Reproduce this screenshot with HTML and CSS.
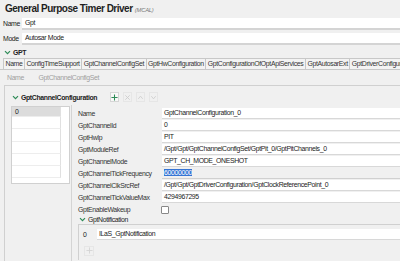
FILE: index.html
```html
<!DOCTYPE html>
<html lang="en">
<head>
    <meta charset="UTF-8">
    <title>General Purpose Timer Driver</title>
    <link rel="stylesheet" href="styles.css">
</head>
<body>
    <div class="title">General Purpose Timer Driver <span class="mcal">(MCAL)</span></div>

    <div class="field-row">
        <label>Name</label>
        <div class="field">Gpt</div>
    </div>
    <div class="field-row">
        <label>Mode</label>
        <div class="field">Autosar Mode</div>
    </div>

    <div class="section-head">
        <svg class="chev" width="7" height="5" viewBox="0 0 7 5"><path d="M1 1.2l2.5 2.5 2.5-2.5" stroke="#2e8b57" stroke-width="1.2" fill="none"/></svg>
        GPT
    </div>

    <div class="tabs">
        <div class="tab">Name</div>
        <div class="tab">ConfigTimeSupport</div>
        <div class="tab">GptChannelConfigSet</div>
        <div class="tab">GptHwConfiguration</div>
        <div class="tab">GptConfigurationOfOptApiServices</div>
        <div class="tab">GptAutosarExt</div>
        <div class="tab">GptDriverConfiguration</div>
    </div>

    <div class="set-name">
        <span class="set-label">Name</span>
        <span>GptChannelConfigSet</span>
    </div>

    <div class="panel">
        <div class="panel-head">
            <svg class="chev" width="7" height="5" viewBox="0 0 7 5"><path d="M1 1.2l2.5 2.5 2.5-2.5" stroke="#2e8b57" stroke-width="1.2" fill="none"/></svg>
            <span class="panel-title">GptChannelConfiguration</span>
            <div class="tools">
                <span class="tool add">
                    <svg width="7" height="7" viewBox="0 0 8 8"><path d="M4 0.5v7M0.5 4h7" stroke="#2e8b57" stroke-width="1.2"/></svg>
                </span>
                <span class="tool">
                    <svg width="7" height="7" viewBox="0 0 8 8"><path d="M1.5 1.5l5 5M6.5 1.5l-5 5" stroke="#cdcdcd" stroke-width="1"/></svg>
                </span>
                <span class="tool">
                    <svg width="7" height="7" viewBox="0 0 8 8"><path d="M1.5 5.5l2.5-3 2.5 3" stroke="#cdcdcd" stroke-width="1" fill="none"/></svg>
                </span>
                <span class="tool">
                    <svg width="7" height="7" viewBox="0 0 8 8"><path d="M1.5 2.5l2.5 3 2.5-3" stroke="#cdcdcd" stroke-width="1" fill="none"/></svg>
                </span>
            </div>
        </div>

        <div class="panel-body">
            <div class="left">
                <div class="list">
                    <div class="list-row selected">0</div>
                    <div class="list-row"></div>
                    <div class="list-row"></div>
                    <div class="list-row"></div>
                    <div class="list-row"></div>
                    <div class="list-row"></div>
                </div>
            </div>

            <div class="props">
                <div class="prop"><span class="prop-label">Name</span><div class="value">GptChannelConfiguration_0</div></div>
                <div class="prop"><span class="prop-label">GptChannelId</span><div class="value">0</div></div>
                <div class="prop"><span class="prop-label">GptHwIp</span><div class="value">PIT</div></div>
                <div class="prop"><span class="prop-label">GptModuleRef</span><div class="value">/Gpt/Gpt/GptChannelConfigSet/GptPit_0/GptPitChannels_0</div></div>
                <div class="prop"><span class="prop-label">GptChannelMode</span><div class="value">GPT_CH_MODE_ONESHOT</div></div>
                <div class="prop"><span class="prop-label">GptChannelTickFrequency</span><div class="value editing"><span class="sel">60000000</span></div></div>
                <div class="prop"><span class="prop-label">GptChannelClkSrcRef</span><div class="value">/Gpt/Gpt/GptDriverConfiguration/GptClockReferencePoint_0</div></div>
                <div class="prop"><span class="prop-label">GptChannelTickValueMax</span><div class="value">4294967295</div></div>
                <div class="prop"><span class="prop-label">GptEnableWakeup</span><span class="check"></span></div>
                <div class="sub-head">
                    <svg class="chev" width="7" height="5" viewBox="0 0 7 5"><path d="M1 1.2l2.5 2.5 2.5-2.5" stroke="#2e8b57" stroke-width="1.2" fill="none"/></svg>
                    GptNotification
                </div>
                <div class="sub-panel">
                    <div class="sub-row"><span class="idx">0</span><div class="value">ILaS_GptNotification</div></div>
                    <div class="sub-add">
                        <svg width="7" height="7" viewBox="0 0 8 8"><path d="M4 0.5v7M0.5 4h7" stroke="#d4d4d4" stroke-width="1"/></svg>
                    </div>
                </div>
            </div>
        </div>
    </div>
</body>
</html>
```

FILE: styles.css
```css
html, body {
    overflow: hidden;
}
body {
    margin: 0;
    height: 261px;
    background: #f0f0f0;
    font-family: 'Liberation Sans', Arial, sans-serif;
    font-size: 6.9px;
    letter-spacing: -0.35px;
    color: #222;
}
.title {
    font-size: 10px;
    letter-spacing: -0.5px;
    font-weight: bold;
    padding: 2px 5px 0;
    height: 14px;
    line-height: 14px;
    color: #1e1e1e;
}
.mcal {
    font-size: 5.8px;
    letter-spacing: -0.2px;
    font-weight: normal;
    font-style: italic;
    color: #777;
}
.field-row {
    display: flex;
    align-items: center;
    height: 15px;
}
.field-row label {
    width: 19px;
    padding-left: 3px;
}
.field {
    flex: 1;
    background: white;
    height: 10px;
    line-height: 10px;
    padding-left: 3px;
    border-bottom: 2px solid #d4d4d4;
}
.section-head {
    display: flex;
    align-items: center;
    margin-top: 1px;
    height: 10px;
    padding-left: 4px;
    font-weight: bold;
}
.chev {
    margin-right: 2px;
}
.tabs {
    display: flex;
    margin-top: 1px;
    padding-left: 3px;
    border-bottom: 1px solid #c8c8c8;
    white-space: nowrap;
    overflow: hidden;
}
.tab {
    height: 10px;
    line-height: 10px;
    padding: 0 1.5px;
    border: 1px solid #c8c8c8;
    border-bottom: none;
    margin-right: -1px;
    background: #f3f3f3;
    color: #333;
}
.set-name {
    height: 15px;
    line-height: 15px;
    padding-left: 7px;
    color: #a0a0a0;
}
.set-label {
    display: inline-block;
    width: 30px;
}
.panel {
    margin-left: 4px;
    border-top: 1px solid #d0d0d0;
    border-left: 1px solid #d0d0d0;
}
.panel-head {
    display: flex;
    align-items: center;
    height: 16px;
    padding-left: 7px;
    margin-top: 3px;
}
.panel-title {
    font-weight: bold;
    width: 89px;
}
.tools {
    display: flex;
    gap: 4px;
}
.tool {
    width: 9px;
    height: 10px;
    display: flex;
    align-items: center;
    justify-content: center;
    border: 1px solid #e6e6e6;
    box-sizing: border-box;
}
.tool.add {
    border-color: #d6d6d6;
    background: #f8f8f8;
}
.panel-body {
    display: flex;
}
.left {
    width: 67px;
    height: 156px;
    border-right: 1px solid #d4d4d4;
    padding-left: 6px;
    padding-top: 1px;
    box-sizing: border-box;
}
.list {
    width: 59px;
    height: 78px;
    background: white;
    border: 1px solid #d0d0d0;
    box-sizing: border-box;
    overflow: hidden;
}
.list-row {
    height: 12.3px;
    line-height: 10px;
    padding-left: 3px;
    margin-right: 8px;
    border-bottom: 1px solid #ededed;
    border-right: 1px solid #e0e0e0;
    box-sizing: border-box;
}
.list-row.selected {
    background: #dcdcdc;
    height: 10px;
}
.props {
    flex: 1;
    padding-left: 6px;
    padding-top: 2px;
}
.prop {
    display: flex;
    align-items: center;
    height: 12.1px;
}
.prop-label {
    width: 84px;
    flex-shrink: 0;
    color: #333;
}
.value {
    flex: 1;
    background: white;
    height: 10px;
    line-height: 10px;
    padding-left: 2px;
    border-bottom: 1px solid #d8d8d8;
    white-space: nowrap;
    overflow: hidden;
}
.value.editing {
    background: #f0f0f0;
    border-bottom-color: #d0d0d0;
}
.sel {
    background: #3574d4;
    color: white;
}
.check {
    width: 6px;
    height: 6px;
    margin-left: -1px;
    border: 1px solid #888;
    background: white;
    border-radius: 1px;
}
.sub-head {
    display: flex;
    align-items: center;
    height: 8px;
    padding-left: 1px;
}
.sub-panel {
    height: 36px;
    border-top: 1px solid #d0d0d0;
    border-left: 1px solid #d0d0d0;
    padding: 4px 0 0 4px;
    box-sizing: border-box;
}
.sub-row {
    display: flex;
    align-items: center;
}
.idx {
    width: 14px;
}
.sub-add {
    width: 8px;
    height: 8px;
    margin-top: 6px;
    margin-left: 1px;
    display: flex;
    align-items: center;
    justify-content: center;
    border: 1px solid #e6e6e6;
}
```
